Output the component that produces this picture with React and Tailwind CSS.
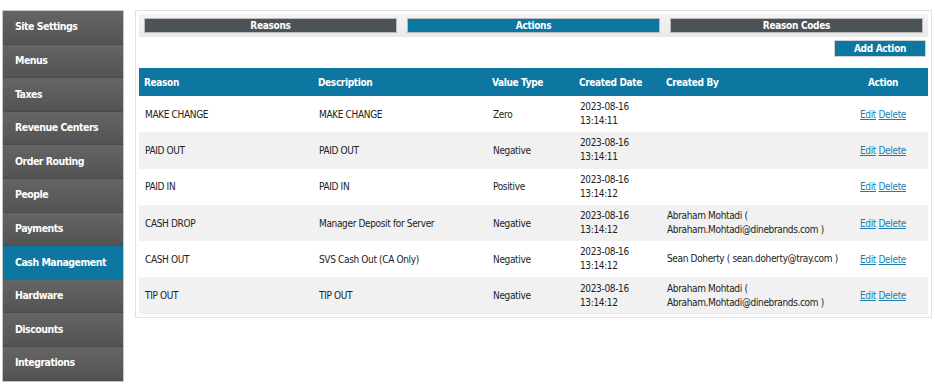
import { Fragment } from "react";

const NAV = [
  "Site Settings",
  "Menus",
  "Taxes",
  "Revenue Centers",
  "Order Routing",
  "People",
  "Payments",
  "Cash Management",
  "Hardware",
  "Discounts",
  "Integrations",
];

const ROWS = [
  { reason: "MAKE CHANGE", desc: "MAKE CHANGE", type: "Zero", time: "13:14:11", by: null },
  { reason: "PAID OUT", desc: "PAID OUT", type: "Negative", time: "13:14:11", by: null },
  { reason: "PAID IN", desc: "PAID IN", type: "Positive", time: "13:14:12", by: null },
  { reason: "CASH DROP", desc: "Manager Deposit for Server", type: "Negative", time: "13:14:12", by: ["Abraham Mohtadi (", "Abraham.Mohtadi@dinebrands.com )"] },
  { reason: "CASH OUT", desc: "SVS Cash Out (CA Only)", type: "Negative", time: "13:14:12", by: ["Sean Doherty ( sean.doherty@tray.com )"] },
  { reason: "TIP OUT", desc: "TIP OUT", type: "Negative", time: "13:14:12", by: ["Abraham Mohtadi (", "Abraham.Mohtadi@dinebrands.com )"] },
];

const font = { fontFamily: '"DejaVu Sans Condensed", "DejaVu Sans", Verdana, sans-serif' };

function Sidebar() {
  return (
    <nav className="w-[122px] border border-[#c8c8c8] flex flex-col shrink-0">
      {NAV.map((label) => (
        <div
          key={label}
          className={`h-[33.6px] flex items-center pl-[12px] text-[10.5px] font-bold tracking-[-0.5px] text-white ${
            label === "Cash Management"
              ? "bg-[#0e77a1]"
              : "bg-gradient-to-b from-[#656565] to-[#535353] border-b border-[#4a4a4a]"
          }`}
        >
          {label}
        </div>
      ))}
    </nav>
  );
}

function Tabs() {
  const tabs = [
    { label: "Reasons", active: false },
    { label: "Actions", active: true },
    { label: "Reason Codes", active: false },
  ];
  return (
    <div className="flex gap-[10px] px-[5px] py-[4px] bg-gradient-to-b from-[#f4f4f4] to-[#e9e9e9]">
      {tabs.map((t) => (
        <div
          key={t.label}
          className={`flex-1 h-[15px] flex items-center justify-center text-[10px] font-bold tracking-[-0.3px] text-white border border-[#bbb] ${
            t.active ? "bg-[#0e77a1]" : "bg-[#4b5357]"
          }`}
        >
          {t.label}
        </div>
      ))}
    </div>
  );
}

function ActionTable() {
  return (
    <table className="w-full table-fixed border-collapse text-[10px] tracking-[-0.35px] text-[#222]">
      <colgroup>
        <col className="w-[174px]" />
        <col className="w-[174px]" />
        <col className="w-[87px]" />
        <col className="w-[87px]" />
        <col className="w-[177px]" />
        <col />
      </colgroup>
      <thead>
        <tr className="bg-[#0e77a1] text-white h-[28px] text-left">
          <th className="pl-[5px] font-bold">Reason</th>
          <th className="pl-[5px] font-bold">Description</th>
          <th className="pl-[5px] font-bold">Value Type</th>
          <th className="pl-[5px] font-bold">Created Date</th>
          <th className="pl-[5px] font-bold">Created By</th>
          <th className="text-center font-bold">Action</th>
        </tr>
      </thead>
      <tbody>
        {ROWS.map((r, i) => (
          <tr key={r.reason} className={`h-[36.3px] ${i % 2 ? "bg-[#f1f1f1]" : "bg-white"}`}>
            <td className="pl-[6px]">{r.reason}</td>
            <td className="pl-[6px]">{r.desc}</td>
            <td className="pl-[6px]">{r.type}</td>
            <td className="pl-[6px] leading-[14px]">
              2023-08-16
              <br />
              {r.time}
            </td>
            <td className="pl-[6px] leading-[14px] whitespace-nowrap">
              {r.by &&
                r.by.map((line, j) => (
                  <Fragment key={j}>
                    {j > 0 && <br />}
                    {line}
                  </Fragment>
                ))}
            </td>
            <td className="text-center">
              <a className="text-[#1a7fb0] underline cursor-pointer">Edit</a>{" "}
              <a className="text-[#1a7fb0] underline cursor-pointer">Delete</a>
            </td>
          </tr>
        ))}
      </tbody>
    </table>
  );
}

export default function App() {
  return (
    <div className="w-[936px] h-[390px] bg-white flex items-start gap-[11px] pl-[2px] pt-[10px]" style={font}>
      <Sidebar />
      <main className="w-[797px] border border-[#e2e2e2] p-[3px]">
        <Tabs />
        <div className="flex justify-end pt-[3px] pr-[2px]">
          <button className="w-[92px] h-[17px] bg-[#0e77a1] text-white text-[10px] font-bold tracking-[-0.3px] border border-[#d0d0d0]">
            Add Action
          </button>
        </div>
        <div className="mt-[11px]">
          <ActionTable />
        </div>
      </main>
    </div>
  );
}
